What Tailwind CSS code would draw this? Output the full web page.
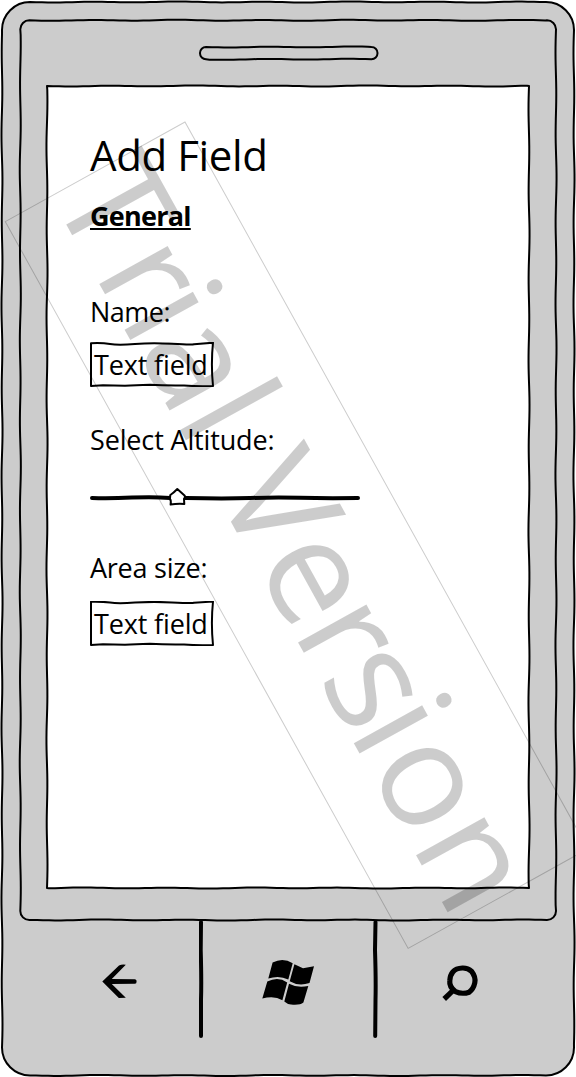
<!DOCTYPE html>
<html lang="en">
<head>
<meta charset="utf-8">
<title>Add Field</title>
<script src="https://cdn.jsdelivr.net/npm/@tailwindcss/browser@4"></script>
</head>
<body class="bg-white">
<div class="relative flex h-[1077px] w-[576px] flex-col overflow-hidden font-['Open_Sans','Noto_Sans',sans-serif] text-[27px] leading-[36px] text-black">
  <!-- Phone body, bezel, speaker and screen outlines -->
  <svg class="absolute inset-0" width="576" height="1077" fill="#ccc" stroke="#000" stroke-width="2" stroke-linejoin="round">
    <path data-box="2,2,574,1075.5,28"/>
    <path data-box="20.3,20.3,556,920,9"/>
    <path data-box="200,47,377.5,59.3,6"/>
    <path data-box="47,86,529,888,0" fill="#fff"/>
  </svg>

  <main class="relative flex h-[920px] flex-col items-start pt-[127px] pl-[90px]">
    <h1 class="text-[42px] leading-[56px] tracking-[-0.4px] whitespace-nowrap">Add Field</h1>
    <h2 class="mt-[15px] text-[27px] font-bold tracking-[-0.75px] whitespace-nowrap underline decoration-2 underline-offset-[2px]">General</h2>
    <label class="mt-[60px] tracking-[-0.5px] whitespace-nowrap">Name:</label>
    <div class="relative mt-[12px] h-[45px] w-[124px] pt-[5px] pl-[4px] tracking-[-0.15px] whitespace-nowrap">
      <svg class="absolute inset-0" width="124" height="45" fill="none" stroke="#000" stroke-width="2" stroke-linejoin="round"><path d="M1 1.2 Q12 .6 20 2 T45 2 T82 1.8 T104 2.2 L123 .7 Q120.8 22 123 44 Q108 44.6 94 43.5 Q75 43.8 60 42.8 Q45 43 35 43.8 L13 43.2 L1 44Z"/></svg>
      <span>Text field</span>
    </div>
    <label class="mt-[35px] tracking-[-0.15px] whitespace-nowrap">Select Altitude:</label>
    <svg class="mt-[26px] block" width="272" height="24" fill="none" stroke="#000" stroke-linecap="round" stroke-linejoin="round">
      <path stroke-width="4" d="M2 14 Q20 14.5 42 13.6 T80 14 L96 14 Q135 14.8 160 14 T210 13.8 T268 14"/>
      <path stroke-width="2" fill="#fff" d="M87.3 5 L94.8 11.8 Q95.3 13.5 94 15 L94.3 20 Q87 19.5 80.6 20.6 Q81.3 16.5 80 15 Q80 13 80.3 11 Q83.5 9 87.3 5Z"/>
    </svg>
    <label class="mt-[42px] tracking-[-0.25px] whitespace-nowrap">Area size:</label>
    <div class="relative mt-[15px] h-[45px] w-[124px] pt-[5px] pl-[4px] tracking-[-0.15px] whitespace-nowrap">
      <svg class="absolute inset-0" width="124" height="45" fill="none" stroke="#000" stroke-width="2" stroke-linejoin="round"><path d="M1 .7 Q12 .4 20 1.6 T45 1.6 T82 1.4 T104 1.8 L123 .5 Q120.8 22 123 44 Q108 44.6 94 43.5 Q75 43.8 60 42.8 Q45 43 35 43.8 L13 43.2 L1 44Z"/></svg>
      <span>Text field</span>
    </div>
  </main>

  <nav class="relative flex h-[157px]">
    <div class="flex w-[199px] pt-[44px] pl-[101px]">
      <svg width="38" height="36"><path d="M1.3 17.5 L18 1.4 Q21 .2 24.8.8 L10.8 15 L34 15.2 Q35.8 15.5 35.6 17.5 Q35.6 19.7 34 19.8 L10.8 20 L24.8 33.8 L17.8 33.9Z"/></svg>
    </div>
    <svg class="shrink-0" width="5" height="120"><path d="M2 2 L1.7 30 Q2.6 60 2 80 L2 116" fill="none" stroke="#000" stroke-width="4" stroke-linecap="round"/></svg>
    <div class="flex w-[169px] pt-[38px] pl-[57px]">
      <svg width="54" height="48"><path d="M11.6 4.5 Q22 -1 31.7 5.2 L27.3 21.5 Q18 17 7.3 20.6 Z M33.4 6.2 L42 10.2 L53 8.3 L48.5 25 Q37.5 28.5 28.7 23.2Z M6.3 23.6 Q17 18 26.2 24.5 L21.4 42.2 Q13 37 1.3 40.6Z M28 25.8 Q36 30.2 47.3 28 L42.4 44.6 Q39 47.5 30 46.6 Q26 46 23.3 43.5Z"/></svg>
    </div>
    <svg class="shrink-0" width="5" height="120"><path d="M2.5 2 L2 30 Q3 60 2.5 80 L2.2 116" fill="none" stroke="#000" stroke-width="4" stroke-linecap="round"/></svg>
    <div class="flex pt-[44px] pl-[63px]">
      <svg width="40" height="40" fill="none" stroke="#000" stroke-width="5.2"><path d="M21.4 4 Q27 3.8 30.6 7.3 Q35 13 33.8 18.8 Q32.5 25 28.2 28.2 Q21 30.6 14.5 27.6 Q8 23 8.8 16.5 Q9.2 11 11.8 8 Q15 4.2 21.4 4Z"/><path d="M13.2 25.4 L3.2 35"/></svg>
    </div>
  </nav>

  <!-- Diagonal watermark -->
  <svg class="absolute inset-0" width="576" height="1077">
    <g transform="matrix(.4848 .8746 -.8746 .4848 185 122)">
      <rect width="831" height="205.5" fill="none" stroke="#000" stroke-opacity=".2"/>
      <text x="-2 87.6 139.8 175.7 254.5 300 334.4 420 497.5 550.7 612.7 652 740.8" y="153.5" font-size="146" fill="#000" fill-opacity=".2">Trial Version</text>
    </g>
  </svg>
</div>
<script>
  // Hand-drawn rounded rectangles: straight edges get a slight wave.
  document.querySelectorAll('[data-box]').forEach(function (p) {
    var b = p.dataset.box.split(',').map(Number), l = b[0], t = b[1], r = b[2], m = b[3], c = b[4], d = 'M' + (l + c) + ' ' + t;
    function edge(x1, y1, x2, y2) {
      var n = Math.hypot(x2 - x1, y2 - y1), nx = -(y2 - y1) / n, ny = (x2 - x1) / n;
      for (var s = 6; s < n; s += 6) {
        var w = Math.sin(s / 13.5) * 0.4 + Math.sin(s / 31) * 0.15, k = s / n;
        d += 'L' + (x1 + (x2 - x1) * k + nx * w).toFixed(2) + ' ' + (y1 + (y2 - y1) * k + ny * w).toFixed(2);
      }
      d += 'L' + x2 + ' ' + y2;
    }
    function corner(x, y) { d += 'A' + c + ' ' + c + ' 0 0 1 ' + x + ' ' + y; }
    edge(l + c, t, r - c, t); corner(r, t + c);
    edge(r, t + c, r, m - c); corner(r - c, m);
    edge(r - c, m, l + c, m); corner(l, m - c);
    edge(l, m - c, l, t + c); corner(l + c, t);
    p.setAttribute('d', d + 'Z');
  });
</script>
</body>
</html>
